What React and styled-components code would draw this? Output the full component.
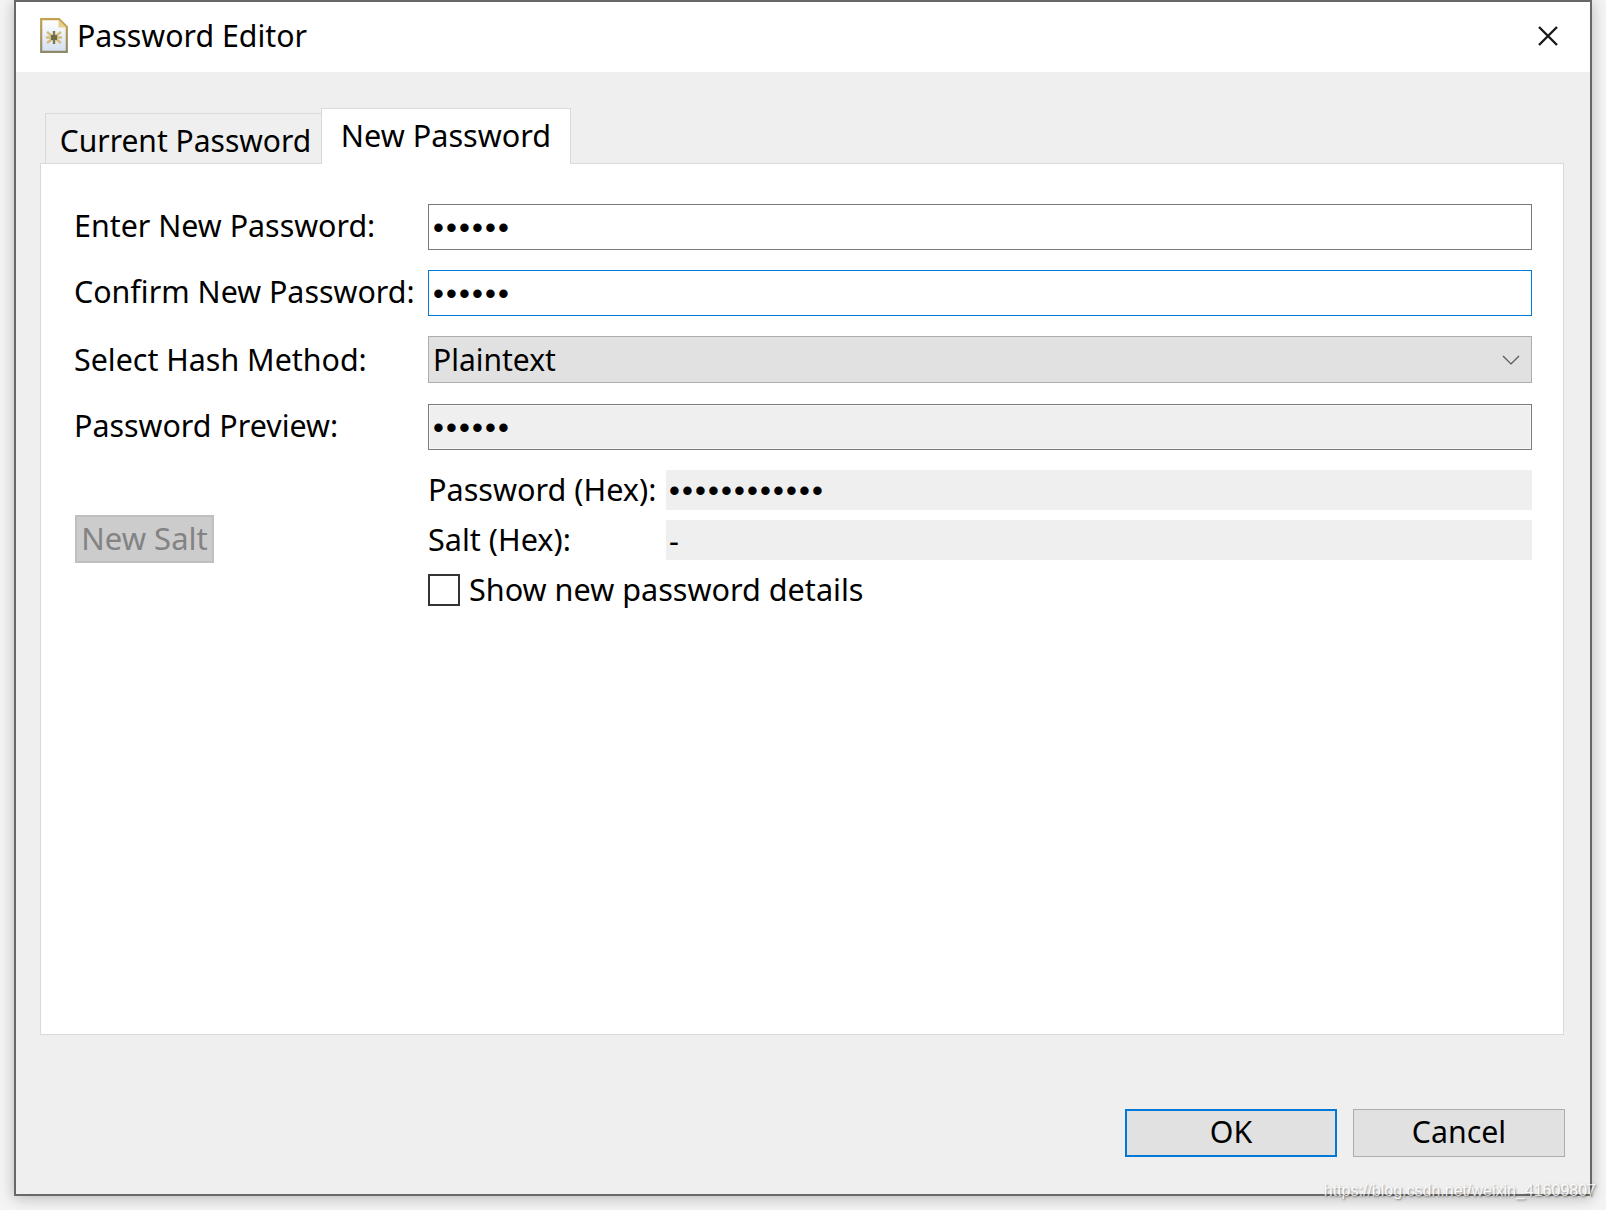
import React from "react";
import styled, { createGlobalStyle } from "styled-components";

const Global = createGlobalStyle`
  html, body { margin: 0; padding: 0; background: #fff; }
  * { box-sizing: border-box; }
`;

const font = `"Noto Sans", "Open Sans", sans-serif`;

export default function App() {
  return (
    <Page>
      <Global />
      <Win>
        <TitleBar>
          <FileIcon />
          <Title>Password Editor</Title>
          <Close aria-label="Close">
            <svg width="20" height="20" viewBox="0 0 20 20">
              <path d="M1 1 L19 19 M19 1 L1 19" stroke="#1a1a1a" strokeWidth="2.4" fill="none" />
            </svg>
          </Close>
        </TitleBar>
        <Body>
          <Tabs>
            <Tab>Current Password</Tab>
            <Tab $active>New Password</Tab>
          </Tabs>
          <Panel>
            <FormRow>
              <Label>Enter New Password:</Label>
              <Field><Dots>••••••</Dots></Field>
            </FormRow>
            <FormRow>
              <Label>Confirm New Password:</Label>
              <Field $focused><Dots>••••••</Dots></Field>
            </FormRow>
            <FormRow>
              <Label $flush>Select Hash Method:</Label>
              <Select>
                <span>Plaintext</span>
                <svg width="18" height="10" viewBox="0 0 18 10">
                  <path d="M1 1 L9 9 L17 1" stroke="#555" strokeWidth="1.2" fill="none" />
                </svg>
              </Select>
            </FormRow>
            <FormRow>
              <Label>Password Preview:</Label>
              <Field $readonly><Dots>••••••</Dots></Field>
            </FormRow>
            <Details>
              <SaltButton disabled>New Salt</SaltButton>
              <HexColumn>
                <HexRow>
                  <HexLabel>Password (Hex):</HexLabel>
                  <HexValue><Dots>••••••••••••</Dots></HexValue>
                </HexRow>
                <HexRow>
                  <HexLabel>Salt (Hex):</HexLabel>
                  <HexValue>-</HexValue>
                </HexRow>
                <CheckRow>
                  <Check />
                  <CheckText>Show new password details</CheckText>
                </CheckRow>
              </HexColumn>
            </Details>
          </Panel>
          <Footer>
            <Button $primary>OK</Button>
            <Button>Cancel</Button>
          </Footer>
        </Body>
      </Win>
      <Watermark>https://blog.csdn.net/weixin_41609807</Watermark>
    </Page>
  );
}

function FileIcon() {
  return (
    <IconBox width="28" height="35" viewBox="0 0 28 35">
      <defs>
        <linearGradient id="sheet" x1="0" y1="0" x2="0" y2="1">
          <stop offset="0" stopColor="#ffffff" />
          <stop offset="1" stopColor="#d5e0f2" />
        </linearGradient>
        <linearGradient id="edge" x1="0" y1="0" x2="0" y2="1">
          <stop offset="0" stopColor="#c6a04c" />
          <stop offset="1" stopColor="#8e8a68" />
        </linearGradient>
      </defs>
      <path d="M1.2 1.2 H19 L26.8 9 V33.8 H1.2 Z" fill="url(#sheet)" stroke="url(#edge)" strokeWidth="2.2" />
      <path d="M18.5 1.5 V9.5 H26.5 Z" fill="#e8cf8a" />
      <path d="M7 14 L21 25 M21 14 L7 25 M6 19.5 H22" stroke="#d3bd7c" strokeWidth="2.4" fill="none" />
      <path d="M14 13 V26" stroke="#7d7750" strokeWidth="2.4" fill="none" />
      <rect x="11" y="17" width="6" height="5" fill="#6f6a48" />
    </IconBox>
  );
}

const Page = styled.div`
  position: relative;
  height: 1210px;
  padding: 0 14px 14px 14px;
  background: #f4f4f4;
  font-family: ${font};
  color: #000;
`;
const Win = styled.div`
  height: 1196px;
  display: flex;
  flex-direction: column;
  border: 2px solid #686868;
  background: #efefef;
  box-shadow: 0 2px 14px rgba(0, 0, 0, 0.25);
`;
const TitleBar = styled.div`
  height: 70px;
  flex: none;
  display: flex;
  align-items: center;
  background: #fff;
  padding: 0 32px 3px 24px;
`;
const IconBox = styled.svg`
  flex: none;
  margin-right: 9px;
`;
const Title = styled.div`
  font-size: 30.3px;
`;
const Close = styled.div`
  margin-left: auto;
  width: 20px;
  height: 20px;
  line-height: 0;
`;
const Body = styled.div`
  flex: 1;
  display: flex;
  flex-direction: column;
  padding: 36px 26px 37px 24px;
`;
const Tabs = styled.div`
  display: flex;
  align-items: flex-end;
  height: 55px;
  padding-left: 5px;
  flex: none;
`;
const Tab = styled.div`
  display: flex;
  align-items: center;
  justify-content: center;
  font-size: ${(p) => (p.$active ? "30.6px" : "30px")};
  border: 1px solid #dadada;
  border-bottom: none;
  ${(p) =>
    p.$active
      ? `width: 250px; height: 56px; background: #fff; position: relative; z-index: 1; margin-bottom: -1px; padding-bottom: 4px;`
      : `width: 276px; height: 50px; border-right: none; padding: 3px 0 0 4px;`}
`;
const Panel = styled.div`
  height: 872px;
  flex: none;
  background: #fff;
  border: 1px solid #dadada;
  padding: 40px 31px 0 33px;
  display: flex;
  flex-direction: column;
  gap: 20px;
`;
const FormRow = styled.div`
  display: grid;
  grid-template-columns: 354px 1fr;
  align-items: center;
`;
const Label = styled.div`
  font-size: 30.4px;
  white-space: nowrap;
  padding-bottom: ${(p) => (p.$flush ? "2px" : "4px")};
`;
const Field = styled.div`
  height: 46px;
  display: flex;
  align-items: center;
  padding: 0 4px;
  border: 1px solid ${(p) => (p.$focused ? "#0078d7" : "#7a7a7a")};
  background: ${(p) => (p.$readonly ? "#efefef" : "#fff")};
  box-shadow: ${(p) => (p.$readonly ? "inset 0 0 0 1px #f8f8f8" : "none")};
`;
const Dots = styled.span`
  font-family: "Liberation Sans", sans-serif;
  font-size: 31px;
  line-height: 1;
  letter-spacing: 2.15px;
`;
const Select = styled.div`
  height: 47px;
  margin-bottom: 1px;
  display: flex;
  align-items: center;
  justify-content: space-between;
  padding: 0 11px 0 4px;
  border: 1px solid #adadad;
  background: #e1e1e1;
  font-size: 30px;
`;
const Details = styled.div`
  display: grid;
  grid-template-columns: 354px 1fr;
`;
const SaltButton = styled.button`
  width: 139px;
  height: 48px;
  margin: 45px 0 0 1px;
  padding: 0 0 2px;
  font-family: inherit;
  font-size: 31px;
  color: #838383;
  background: #cccccc;
  border: 2px solid #bfbfbf;
`;
const HexColumn = styled.div`
  display: flex;
  flex-direction: column;
  gap: 10px;
`;
const HexRow = styled.div`
  display: grid;
  grid-template-columns: 238px 1fr;
  grid-template-rows: 40px;
  align-items: center;
  font-size: 30.6px;
`;
const HexLabel = styled.div`
  white-space: nowrap;
  padding-bottom: 3px;
`;
const HexValue = styled.div`
  height: 40px;
  display: flex;
  align-items: center;
  padding: 0 3px;
  background: #efefef;
`;
const CheckRow = styled.div`
  height: 32px;
  display: flex;
  align-items: center;
  gap: 10px;
  margin-top: 4px;
  font-size: 30.6px;
  white-space: nowrap;
`;
const Check = styled.div`
  flex: none;
  width: 32px;
  height: 32px;
  border: 2px solid #333;
  background: #fff;
`;
const CheckText = styled.span`
  margin-left: -1px;
  padding-bottom: 2px;
`;
const Footer = styled.div`
  margin-top: auto;
  margin-right: -1px;
  display: flex;
  justify-content: flex-end;
  gap: 16px;
`;
const Button = styled.button`
  width: 212px;
  height: 48px;
  padding: 0 0 3px;
  font-family: inherit;
  font-size: 30.3px;
  color: #000;
  background: #e1e1e1;
  border: ${(p) => (p.$primary ? "2px solid #0078d7" : "1px solid #adadad")};
`;
const Watermark = styled.div`
  position: absolute;
  right: 10px;
  bottom: 10px;
  font-family: "Liberation Sans", sans-serif;
  font-size: 16px;
  color: #fff;
  opacity: 0.75;
  text-shadow: 1px 1px 2px rgba(0, 0, 0, 0.55);
`;
